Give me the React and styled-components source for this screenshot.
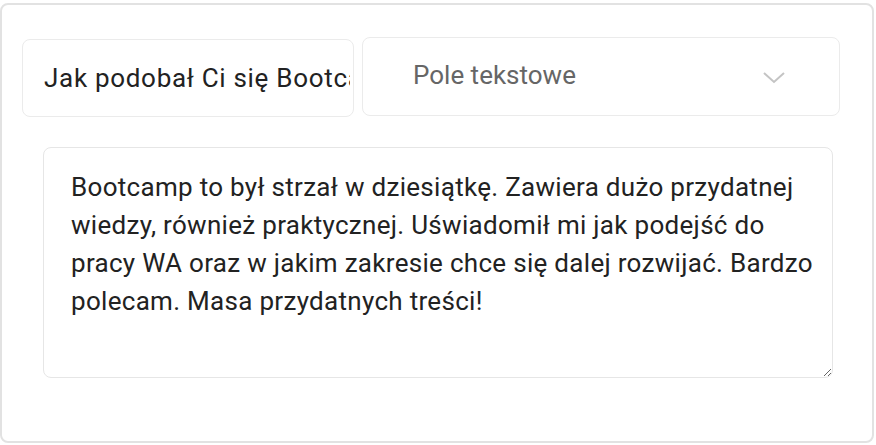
import React from "react";
import styled, { createGlobalStyle } from "styled-components";

const Global = createGlobalStyle`
  html, body { margin: 0; padding: 0; background: #fff; }
  body { font-family: Roboto, "Noto Sans", Arial, sans-serif; }
  * { box-sizing: border-box; }
`;

const Frame = styled.div`
  width: 874px;
  height: 440px;
  margin-top: 3px;
  border: 2px solid #e2e2e2;
  border-radius: 8px;
  background: #fff;
  padding: 32px 0 0 20px;
  display: flex;
  flex-direction: column;
  gap: 30px;
`;

const Row = styled.div`
  display: flex;
  align-items: flex-start;
  gap: 8px;
`;

const TextInput = styled.input`
  width: 332px;
  height: 78px;
  margin-top: 2px;
  border: 1px solid #ebebeb;
  border-radius: 8px;
  padding: 0 3px 0 21px;
  font-family: Roboto, Arial, sans-serif;
  font-size: 26px;
  letter-spacing: 0.7px;
  color: #222;
  background: #fff;
  outline: none;
`;

const Select = styled.div`
  width: 478px;
  height: 79px;
  border: 1px solid #ebebeb;
  border-radius: 8px;
  display: flex;
  align-items: center;
  justify-content: space-between;
  padding: 0 54px 4px 50px;
  font-size: 26px;
  color: #666;
`;

const Chevron = styled.svg`
  width: 22px;
  height: 12px;
  margin-top: 6px;
`;

const Area = styled.textarea`
  width: 790px;
  height: 231px;
  margin-left: 21px;
  border: 1px solid #e6e6e6;
  border-radius: 8px;
  padding: 20px 12px 20px 27px;
  font-family: Roboto, Arial, sans-serif;
  font-size: 26px;
  letter-spacing: 0.3px;
  line-height: 38px;
  color: #222;
  background: #fff;
  resize: both;
  outline: none;
  overflow: hidden;
`;

export default function App() {
  return (
    <>
      <Global />
      <Frame>
        <Row>
          <TextInput readOnly defaultValue="Jak podobał Ci się Bootcamp?" />
          <Select>
            <span>Pole tekstowe</span>
            <Chevron viewBox="0 0 22 12">
              <path d="M1 1 L11 10 L21 1" fill="none" stroke="#c4c4c4" strokeWidth="2" />
            </Chevron>
          </Select>
        </Row>
        <Area
          readOnly
          defaultValue="Bootcamp to był strzał w dziesiątkę. Zawiera dużo przydatnej wiedzy, również praktycznej. Uświadomił mi jak podejść do pracy WA oraz w jakim zakresie chce się dalej rozwijać. Bardzo polecam. Masa przydatnych treści!"
        />
      </Frame>
    </>
  );
}
